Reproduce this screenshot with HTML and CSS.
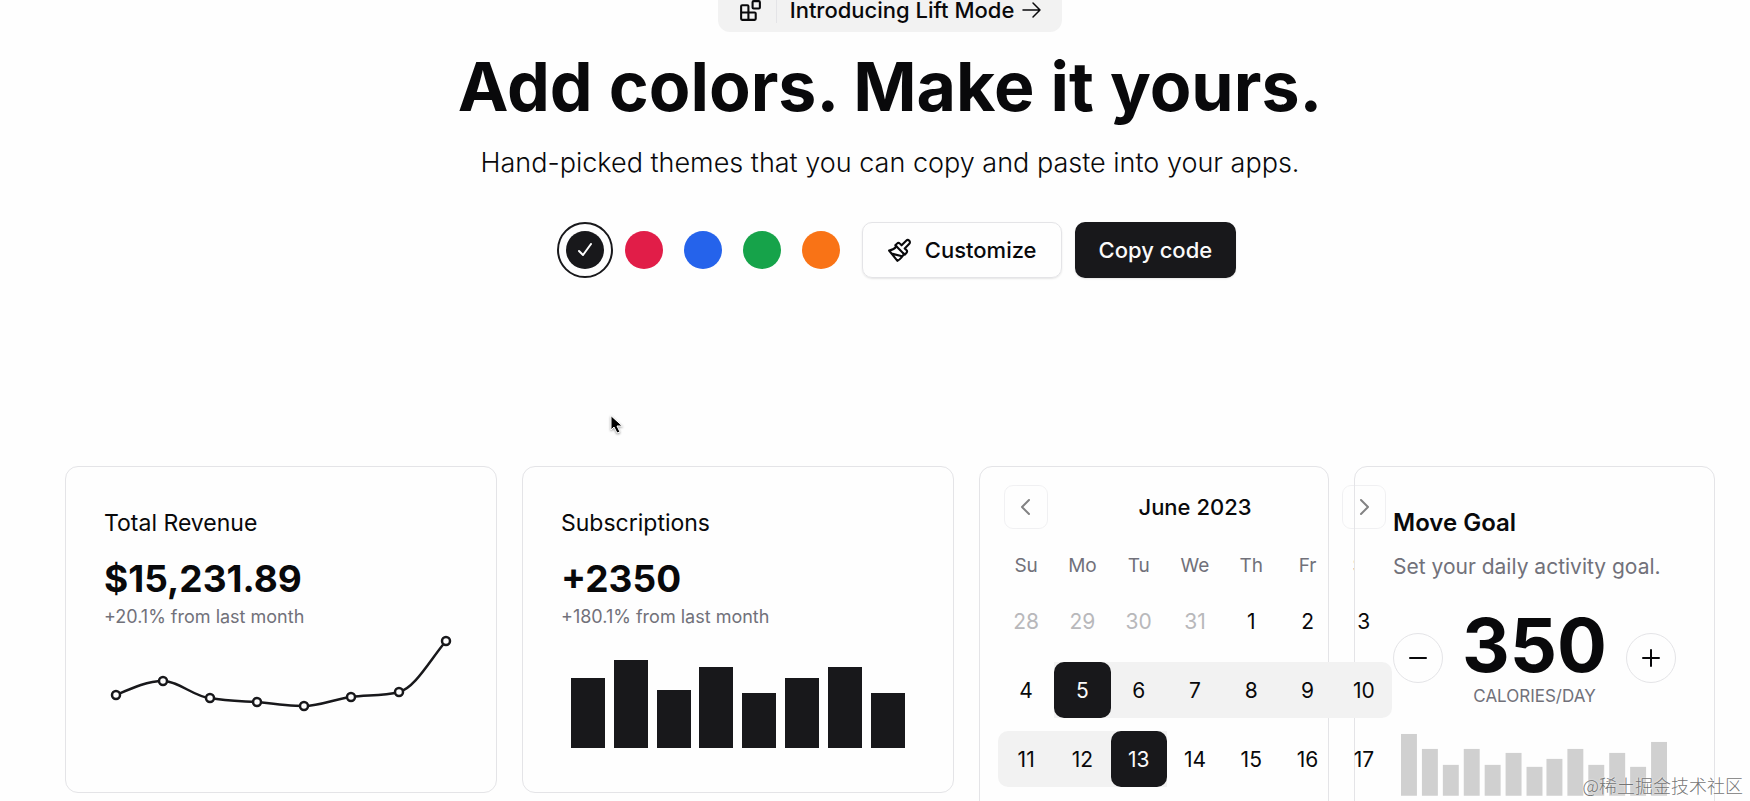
FILE: index.html
```html
<!DOCTYPE html>
<html lang="en">
<head>
    <meta charset="UTF-8">
    <meta name="viewport" content="width=device-width, initial-scale=1.0">
    <title>Themes</title>
    <link rel="stylesheet" href="styles.css">
</head>
<body>
    <main class="page">
        <section class="hero">
            <a href="#" class="announcement">
                <svg class="icon" viewBox="0 0 24 24"><rect width="7" height="7" x="14" y="3" rx="1"/><path d="M10 21V8a1 1 0 0 0-1-1H4a1 1 0 0 0-1 1v12a1 1 0 0 0 1 1h12a1 1 0 0 0 1-1v-5a1 1 0 0 0-1-1H3"/></svg>
                <span class="announcement-divider"></span>
                <span>Introducing Lift Mode</span>
                <svg class="arrow" viewBox="0 0 20 18"><path d="M1 9h17M11 2l7 7-7 7"/></svg>
            </a>
            <h1>Add colors. Make it yours.</h1>
            <p class="lead">Hand-picked themes that you can copy and paste into your apps.</p>
            <div class="actions">
                <div class="swatches">
                    <button type="button" class="swatch swatch--active" aria-label="Zinc" aria-pressed="true">
                        <span class="dot dot--zinc"><svg class="check" viewBox="0 0 14 14"><path d="M1 8l4 4 8-11"/></svg></span>
                    </button>
                    <button type="button" class="swatch" aria-label="Rose"><span class="dot dot--rose"></span></button>
                    <button type="button" class="swatch" aria-label="Blue"><span class="dot dot--blue"></span></button>
                    <button type="button" class="swatch" aria-label="Green"><span class="dot dot--green"></span></button>
                    <button type="button" class="swatch" aria-label="Orange"><span class="dot dot--orange"></span></button>
                </div>
                <button type="button" class="btn btn--outline">
                    <svg class="icon" viewBox="0 0 24 24"><path d="M18.400 2.600 14 7l-1.600-1.600a2 2 0 0 0-2.800 0L8 7l9 9 1.600-1.600a2 2 0 0 0 0-2.800L17 10l4.400-4.400a2.100 2.100 0 1 0-3-3z"/><path d="M9 8c-2 3-4 3.500-7 4l8 10c2-1 6-5 6-7M14.500 17.500 4.500 15"/></svg>
                    Customize
                </button>
                <button type="button" class="btn btn--primary">Copy code</button>
            </div>
        </section>

        <section class="cards">
            <article class="card">
                <h2 class="card-title">Total Revenue</h2>
                <div class="stat">$15,231.89</div>
                <p class="note">+20.1% from last month</p>
                <svg class="chart" viewBox="0 0 354 124">
                    <g class="line">
                        <path d="M12 65C28 58 43 51 59 51C75 51 90 67 106 68C122 71 137 71 153 72C169 74 184 76 200 76C216 76 231 69 247 67C263 65 279 66 295 62C311 58 326 30 342 11"/>
                        <circle cx="12" cy="65" r="4"/>
                        <circle cx="59" cy="51" r="4"/>
                        <circle cx="106" cy="68" r="4"/>
                        <circle cx="153" cy="72" r="4"/>
                        <circle cx="200" cy="76" r="4"/>
                        <circle cx="247" cy="67" r="4"/>
                        <circle cx="295" cy="62" r="4"/>
                        <circle cx="342" cy="11" r="4"/>
                    </g>
                </svg>
            </article>

            <article class="card">
                <h2 class="card-title">Subscriptions</h2>
                <div class="stat">+2350</div>
                <p class="note">+180.1% from last month</p>
                <svg class="chart" viewBox="0 0 354 124">
                    <g class="bars">
                        <rect x="10" y="48" width="34" height="70"/>
                        <rect x="53" y="30" width="34" height="88"/>
                        <rect x="96" y="60" width="34" height="58"/>
                        <rect x="138" y="37" width="34" height="81"/>
                        <rect x="181" y="63" width="34" height="55"/>
                        <rect x="224" y="48" width="34" height="70"/>
                        <rect x="267" y="37" width="34" height="81"/>
                        <rect x="310" y="63" width="34" height="55"/>
                    </g>
                </svg>
            </article>

            <article class="card card--tall calendar">
                <div class="calendar-inner">
                    <div class="calendar-nav">
                        <button type="button" class="nav-btn" aria-label="Previous month"><svg viewBox="0 0 24 24"><path d="M15 5l-7 7 7 7"/></svg></button>
                        <span class="month">June 2023</span>
                        <button type="button" class="nav-btn" aria-label="Next month"><svg viewBox="0 0 24 24"><path d="M9 5l7 7-7 7"/></svg></button>
                    </div>
                    <table>
                        <thead>
                            <tr><th>Su</th><th>Mo</th><th>Tu</th><th>We</th><th>Th</th><th>Fr</th><th>Sa</th></tr>
                        </thead>
                        <tbody>
                            <tr>
                                <td class="outside"><button type="button">28</button></td>
                                <td class="outside"><button type="button">29</button></td>
                                <td class="outside"><button type="button">30</button></td>
                                <td class="outside"><button type="button">31</button></td>
                                <td><button type="button">1</button></td>
                                <td><button type="button">2</button></td>
                                <td><button type="button">3</button></td>
                            </tr>
                            <tr>
                                <td><button type="button">4</button></td>
                                <td class="range selected"><button type="button">5</button></td>
                                <td class="range"><button type="button">6</button></td>
                                <td class="range"><button type="button">7</button></td>
                                <td class="range"><button type="button">8</button></td>
                                <td class="range"><button type="button">9</button></td>
                                <td class="range"><button type="button">10</button></td>
                            </tr>
                            <tr>
                                <td class="range"><button type="button">11</button></td>
                                <td class="range"><button type="button">12</button></td>
                                <td class="range selected"><button type="button">13</button></td>
                                <td><button type="button">14</button></td>
                                <td><button type="button">15</button></td>
                                <td><button type="button">16</button></td>
                                <td><button type="button">17</button></td>
                            </tr>
                        </tbody>
                    </table>
                </div>
            </article>

            <article class="card card--tall">
                <h2 class="card-title card-title--bold">Move Goal</h2>
                <p class="description">Set your daily activity goal.</p>
                <div class="goal">
                    <button type="button" class="round-btn" aria-label="Decrease"><svg viewBox="0 0 20 20"><path d="M2 10h16"/></svg></button>
                    <div class="goal-value">
                        <div class="goal-number">350</div>
                        <div class="goal-unit">CALORIES/DAY</div>
                    </div>
                    <button type="button" class="round-btn" aria-label="Increase"><svg viewBox="0 0 20 20"><path d="M2 10h16M10 2v16"/></svg></button>
                </div>
                <svg class="goal-chart" viewBox="0 0 284 68">
                    <rect x="8" y="6" width="16" height="62"/>
                    <rect x="29" y="21" width="16" height="47"/>
                    <rect x="50" y="37" width="16" height="31"/>
                    <rect x="71" y="21" width="16" height="47"/>
                    <rect x="92" y="37" width="16" height="31"/>
                    <rect x="113" y="25" width="16" height="43"/>
                    <rect x="134" y="39" width="16" height="29"/>
                    <rect x="154" y="31" width="16" height="37"/>
                    <rect x="175" y="21" width="16" height="47"/>
                    <rect x="196" y="37" width="16" height="31"/>
                    <rect x="217" y="25" width="16" height="43"/>
                    <rect x="238" y="39" width="16" height="29"/>
                    <rect x="259" y="14" width="16" height="54"/>
                </svg>
            </article>
        </section>

        <svg class="cursor" viewBox="0 0 14 20"><path d="M2 1v14l3-3 3 6 3-1-3-6h5z"/></svg>
        <div class="watermark">@稀土掘金技术社区</div>
    </main>
</body>
</html>
```
FILE: styles.css
```css
* {
    box-sizing: border-box;
}
body {
    margin: 0;
    font-family: Inter, "Liberation Sans", sans-serif;
    color: #09090b;
    background-color: #fefefe;
}
h1, h2, p {
    margin: 0;
}
button {
    font-family: inherit;
    color: inherit;
    padding: 0;
    border: none;
    background: none;
    cursor: pointer;
}
svg {
    display: block;
    fill: none;
    stroke: currentColor;
    stroke-width: 2;
    stroke-linecap: round;
    stroke-linejoin: round;
}
.page {
    position: relative;
    height: 100vh;
    padding: 0 35px 0 65px;
    overflow: hidden;
}

/* hero */
.hero {
    display: flex;
    flex-direction: column;
    align-items: center;
    margin-top: -12px;
}
.announcement {
    display: flex;
    align-items: center;
    height: 44px;
    padding: 0 20px;
    border-radius: 12px;
    background-color: #f2f2f2;
    color: inherit;
    font-size: 22px;
    font-weight: 500;
    text-decoration: none;
}
.icon {
    width: 25px;
    height: 25px;
}
.announcement-divider {
    width: 1px;
    height: 25px;
    margin: 0 13px;
    background-color: #e4e4e7;
}
.arrow {
    width: 20px;
    height: 18px;
    margin-left: 8px;
    stroke-width: 1.5;
}
h1 {
    margin-top: 14px;
    font-size: 68px;
    font-weight: 700;
    line-height: 80px;
}
.lead {
    margin-top: 17px;
    font-size: 27px;
    font-weight: 300;
    line-height: 40px;
}
.actions {
    display: flex;
    align-items: center;
    gap: 13px;
    margin-top: 39px;
    padding-left: 13px;
}
.swatches {
    display: flex;
    gap: 3px;
}
.swatch {
    display: flex;
    align-items: center;
    justify-content: center;
    width: 56px;
    height: 56px;
    border: 2px solid transparent;
    border-radius: 50%;
}
.swatch--active {
    border-color: #18181b;
}
.dot {
    display: flex;
    align-items: center;
    justify-content: center;
    width: 38px;
    height: 38px;
    border-radius: 50%;
}
.dot--zinc {
    background-color: #18181b;
}
.dot--rose {
    background-color: #e11d48;
}
.dot--blue {
    background-color: #2563eb;
}
.dot--green {
    background-color: #16a34a;
}
.dot--orange {
    background-color: #f97316;
}
.check {
    width: 14px;
    height: 14px;
    color: #fff;
}
.btn {
    display: flex;
    align-items: center;
    gap: 13px;
    height: 56px;
    padding: 0 24px;
    border-radius: 10px;
    font-size: 22px;
    font-weight: 500;
    box-shadow: 0 1px 2px rgba(0, 0, 0, 0.1);
}
.btn--outline {
    border: 1px solid #e4e4e7;
}
.btn--primary {
    background-color: #18181b;
    color: #fafafa;
}

/* cards */
.cards {
    display: grid;
    grid-template-columns: minmax(0, 432fr) minmax(0, 432fr) minmax(0, 350fr) minmax(0, 361fr);
    gap: 25px;
    align-items: start;
    margin-top: 188px;
}
.card {
    padding: 38px;
    border: 1px solid #e4e4e7;
    border-radius: 13px;
    background-color: #fefefe;
}
.card--tall {
    height: 480px;
}
.card-title {
    font-size: 23px;
    font-weight: 400;
    line-height: 36px;
}
.card-title--bold {
    font-size: 24px;
    font-weight: 600;
}
.stat {
    margin-top: 16px;
    font-size: 37px;
    font-weight: 700;
    line-height: 44px;
}
.note {
    margin-top: 2px;
    font-size: 18px;
    line-height: 27px;
    color: #71717a;
}
.chart {
    width: 100%;
}
.line {
    stroke: #18181b;
    stroke-width: 2.5;
}
.line circle {
    fill: #fefefe;
}
.bars {
    fill: #18181b;
    stroke: none;
}

/* calendar */
.calendar {
    padding: 18px;
}
.calendar-inner {
    width: 394px;
}
.calendar-nav {
    display: flex;
    align-items: center;
    justify-content: space-between;
    padding: 0 6px;
}
.month {
    font-size: 22px;
    font-weight: 500;
}
.nav-btn {
    display: flex;
    align-items: center;
    justify-content: center;
    width: 44px;
    height: 44px;
    border: 1px solid #e4e4e7;
    border-radius: 9px;
    opacity: 0.5;
}
.nav-btn svg {
    width: 24px;
    height: 24px;
}
table {
    width: 100%;
    margin-top: 8px;
    border-collapse: separate;
    border-spacing: 0 13px;
    table-layout: fixed;
}
th {
    height: 30px;
    padding: 0;
    font-size: 19px;
    font-weight: 400;
    color: #71717a;
}
/* days stay on top of the neighbouring card */
td {
    position: relative;
    padding: 0;
}
td button {
    display: block;
    width: 100%;
    height: 56px;
    border-radius: 10px;
    font-size: 21px;
}
.outside button {
    color: #b8b8bb;
}
.range {
    background-color: #f2f2f2;
}
.range:first-child {
    border-radius: 10px 0 0 10px;
}
.range:last-child {
    border-radius: 0 10px 10px 0;
}
.selected button {
    background-color: #18181b;
    color: #fafafa;
}

/* move goal */
.description {
    margin-top: 8px;
    font-size: 21px;
    line-height: 36px;
    color: #71717a;
}
.goal {
    display: flex;
    align-items: center;
    justify-content: space-between;
    margin-top: 22px;
}
.round-btn {
    display: flex;
    align-items: center;
    justify-content: center;
    width: 50px;
    height: 50px;
    border: 1px solid #e4e4e7;
    border-radius: 50%;
}
.round-btn svg {
    width: 20px;
    height: 20px;
}
.goal-value {
    text-align: center;
}
.goal-number {
    font-size: 74px;
    font-weight: 700;
    line-height: 76px;
}
.goal-unit {
    font-size: 17px;
    line-height: 26px;
    color: #71717a;
}
.goal-chart {
    width: 100%;
    margin-top: 19px;
    fill: #d0d0d0;
    stroke: none;
}

.cursor {
    position: absolute;
    top: 415px;
    left: 609px;
    width: 14px;
    height: 20px;
    fill: #000;
    stroke: #fff;
    stroke-width: 1;
    filter: drop-shadow(0 1px 1px rgba(0, 0, 0, 0.4));
}
.watermark {
    position: absolute;
    right: 7px;
    bottom: 3px;
    font-family: "Noto Sans CJK SC", sans-serif;
    font-size: 18px;
    font-weight: 300;
    line-height: 26px;
    color: rgba(100, 100, 100, 0.9);
    text-shadow: 0 0 2px #fff;
}
```
